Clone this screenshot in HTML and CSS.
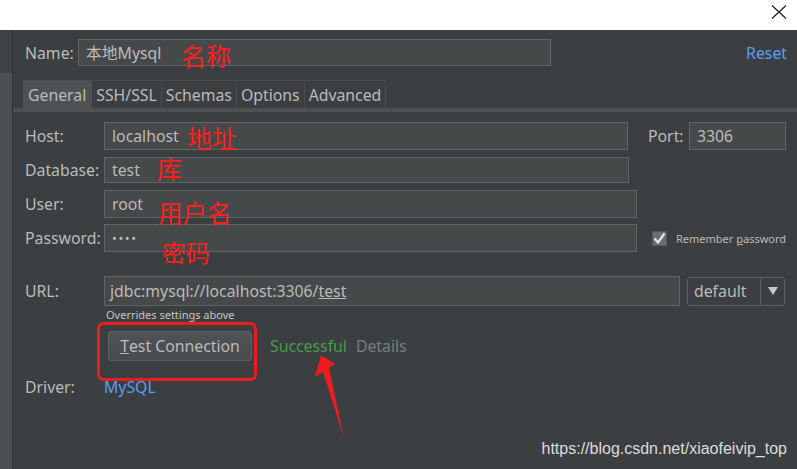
FILE: index.html
```html
<!DOCTYPE html>
<html>
<head>
<meta charset="utf-8">
<link rel="stylesheet" href="styles.css">
</head>
<body>
<div class="title">
  <svg class="close" width="16" height="14" viewBox="0 0 16 14"><path d="M1 0.5 L15 13.5 M15 0.5 L1 13.5" stroke="#222" stroke-width="1.3" fill="none"/></svg>
</div>
<div class="main">
  <div class="side"><div class="side-top"></div><div class="side-bottom"></div></div>
  <div class="content">
    <div class="name-row">
      <span class="lbl name-lbl">Name:</span>
      <div class="input name-input">本地Mysql</div>
      <a class="link reset">Reset</a>
    </div>
    <div class="tabbar">
      <div class="tab active">General</div>
      <div class="tab">SSH/SSL</div>
      <div class="tab">Schemas</div>
      <div class="tab">Options</div>
      <div class="tab">Advanced</div>
    </div>
    <div class="form">
      <div class="row">
        <span class="lbl">Host:</span>
        <div class="input w-host">localhost</div>
        <span class="lbl port-lbl">Port:</span>
        <div class="input w-port">3306</div>
      </div>
      <div class="row">
        <span class="lbl">Database:</span>
        <div class="input w-db">test</div>
      </div>
      <div class="row">
        <span class="lbl">User:</span>
        <div class="input w-user">root</div>
      </div>
      <div class="row">
        <span class="lbl">Password:</span>
        <div class="input w-user dots">••••</div>
        <span class="check"><svg width="15" height="15" viewBox="0 0 15 15"><path d="M2.5 7.5 L6 11.5 L12.5 2.5" stroke="#e6e6e6" stroke-width="2.2" fill="none"/></svg></span>
        <span class="remember">Remember <u>p</u>assword</span>
      </div>
      <div class="row url-row">
        <span class="lbl">URL:</span>
        <div class="input w-url">jdbc:mysql://localhost:3306/<u>test</u></div>
        <div class="combo"><span class="combo-text">default</span><span class="combo-btn"><svg width="10" height="8" viewBox="0 0 10 8"><path d="M0 0 H10 L5 8 Z" fill="#c8c8c8"/></svg></span></div>
      </div>
      <div class="hint">Overrides settings above</div>
      <div class="test-row">
        <div class="btn"><u>T</u>est Connection</div>
        <span class="ok">Successful</span>
        <span class="details">Details</span>
      </div>
      <div class="driver-row">
        <span class="lbl">Driver:</span>
        <a class="link">MySQL</a>
      </div>
    </div>
  </div>
</div>
<div class="ann a-name">名称</div>
<div class="ann a-host">地址</div>
<div class="ann a-db">库</div>
<div class="ann a-user">用户名</div>
<div class="ann a-pw">密码</div>
<div class="redbox"></div>
<svg class="arrow" width="797" height="469" viewBox="0 0 797 469"><polygon points="321,355 335,364 329,368 344,438 323,372 315,377" fill="#ee1c1c"/></svg>
<div class="watermark">https://blog.csdn.net/xiaofeivip_top</div>
</body>
</html>
```
FILE: styles.css
```css
* { box-sizing: border-box; }
html, body { margin: 0; padding: 0; }
body {
  width: 797px;
  height: 469px;
  overflow: hidden;
  position: relative;
  background: #3c3f41;
  font-family: "Noto Sans", "Noto Sans CJK SC", sans-serif;
  font-size: 15.8px;
  color: #bbbbbb;
}
.title {
  height: 30px;
  background: #ffffff;
  display: flex;
  justify-content: flex-end;
  align-items: flex-start;
}
.close { margin: 5px 10px 0 0; }
.main { display: flex; height: 439px; }
.side {
  width: 13px;
  flex: none;
  display: flex;
  flex-direction: column;
  border-right: 1px solid #303234;
}
.side-top { height: 43px; background: #404345; }
.side-bottom { flex: 1; background: #4d5053; }
.content { flex: 1; min-width: 0; padding: 9px 10px 0 12px; }
.name-row { display: flex; align-items: center; height: 27px; }
.lbl { width: 79px; flex: none; white-space: nowrap; }
.name-lbl { width: 53px; }
.input {
  height: 28px;
  background: #45494a;
  border: 1px solid #626566;
  padding-left: 7px;
  display: flex;
  align-items: center;
  white-space: nowrap;
  flex: none;
}
.name-input { width: 473px; height: 27px; }
.link { color: #589df6; }
.reset { margin-left: auto; }
.tabbar {
  display: flex;
  margin: 14px -10px 0 -12px;
  padding-left: 10px;
  border-bottom: 4px solid #4d5153;
  height: 32px;
}
.tab {
  height: 28px;
  padding: 0 4px;
  display: flex;
  align-items: center;
  border-right: 1px solid #4a4d4f;
  border-top: 1px solid #4a4d4f;
}
.tab.active { background: #4e5254; padding: 0 5px; }
.form { margin-top: 10px; }
.row { display: flex; align-items: center; height: 28px; margin-bottom: 6px; }
.w-host { width: 524px; }
.w-db { width: 525px; height: 26px; }
.w-user { width: 533px; }
.w-port { width: 97px; }
.port-lbl { width: 41px; margin-left: 20px; }
.dots { font-size: 13px; letter-spacing: 1.5px; }
.check {
  width: 15px; height: 15px;
  flex: none;
  margin-left: 15px;
  background: #6b6e70;
  border: 1px solid #55585a;
  display: flex;
}
.check svg { margin: -1px; }
.remember { font-size: 11px; margin-left: 9px; white-space: nowrap; }
.url-row { margin-top: 24px; height: 30px; margin-bottom: 0; }
.w-url { width: 576px; height: 30px; padding-left: 5px; }
.combo {
  width: 98px; height: 29px;
  flex: none;
  margin-left: 7px;
  border: 1px solid #5e6163;
  border-radius: 3px;
  display: flex;
  align-items: center;
}
.combo-text { flex: 1; padding-left: 6px; }
.combo-btn {
  width: 24px; height: 100%;
  border-left: 1px solid #5e6163;
  display: flex; align-items: center; justify-content: center;
}
.hint { font-size: 11px; margin: 2px 0 0 81px; line-height: 14px; height: 14px; color: #c4c4c4; }
.test-row { display: flex; align-items: center; margin: 9px 0 0 83px; height: 30px; }
.btn {
  width: 144px; height: 30px;
  background: linear-gradient(#505456, #484b4d);
  border: 1px solid #5e6163;
  border-radius: 3px;
  display: flex; align-items: center; justify-content: center;
}
.ok { color: #4a9a4e; margin-left: 18px; }
.details { color: #7a7d7f; margin-left: 9px; }
.driver-row { display: flex; align-items: center; margin-top: 15px; height: 22px; }
.ann {
  position: absolute;
  color: #ff1e1e;
  font-family: "Noto Sans CJK SC", sans-serif;
  font-size: 25px;
  line-height: 1;
}
.a-name { left: 181px; top: 43px; }
.a-host { left: 187px; top: 125px; }
.a-db { left: 157px; top: 156px; }
.a-user { left: 158px; top: 201px; font-size: 24.5px; }
.a-pw { left: 162px; top: 240px; font-size: 24px; }
.redbox {
  position: absolute;
  left: 97px; top: 322px;
  width: 160px; height: 59px;
  border: 3px solid #e81e1e;
  border-radius: 7px;
}
.arrow { position: absolute; left: 0; top: 0; }
.watermark {
  position: absolute;
  right: 10px; top: 440px;
  font-family: "Liberation Sans", Arial, sans-serif;
  font-size: 16px;
  color: #dcdcdc;
}
```
